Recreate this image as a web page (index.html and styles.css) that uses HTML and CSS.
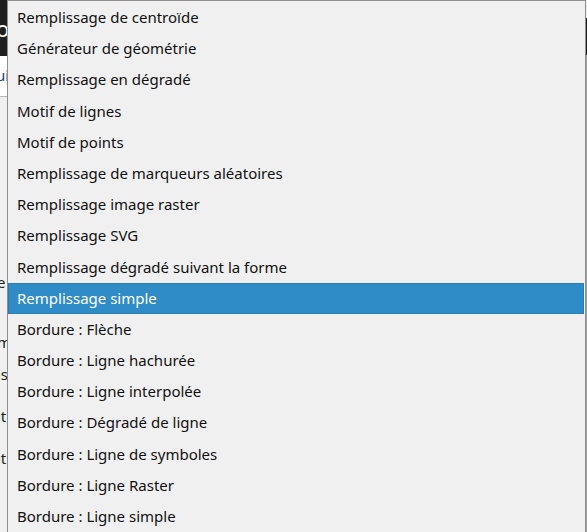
FILE: index.html
```html
<!DOCTYPE html>
<html lang="fr">
<head>
<meta charset="utf-8">
<link rel="stylesheet" href="styles.css">
</head>
<body>
<div class="backdrop">
  <div class="bg-left">
    <div class="bg-dark"><span class="bg-o">o</span></div>
    <div class="bg-field"><span class="bg-ui">ui</span></div>
    <div class="bg-panel">
      <span class="bg-txt t1">e</span>
      <span class="bg-txt t2">m</span>
      <span class="bg-txt t3">is</span>
      <span class="bg-txt t4">it</span>
      <span class="bg-txt t5">it</span>
    </div>
  </div>
  <div class="bg-right">
    <div class="bg-rtop"></div>
    <div class="bg-rdark"></div>
    <div class="bg-rgrey"></div>
  </div>
</div>
<ul class="popup">
  <li class="item">Remplissage de centroïde</li>
  <li class="item">Générateur de géométrie</li>
  <li class="item">Remplissage en dégradé</li>
  <li class="item">Motif de lignes</li>
  <li class="item">Motif de points</li>
  <li class="item">Remplissage de marqueurs aléatoires</li>
  <li class="item">Remplissage image raster</li>
  <li class="item">Remplissage SVG</li>
  <li class="item">Remplissage dégradé suivant la forme</li>
  <li class="item selected">Remplissage simple</li>
  <li class="item">Bordure : Flèche</li>
  <li class="item">Bordure : Ligne hachurée</li>
  <li class="item">Bordure : Ligne interpolée</li>
  <li class="item">Bordure : Dégradé de ligne</li>
  <li class="item">Bordure : Ligne de symboles</li>
  <li class="item">Bordure : Ligne Raster</li>
  <li class="item">Bordure : Ligne simple</li>
</ul>
</body>
</html>
```
FILE: styles.css
```css
html, body {
  margin: 0;
  padding: 0;
  width: 587px;
  height: 532px;
  overflow: hidden;
  font-family: "Noto Sans", "Open Sans", sans-serif;
}
.backdrop {
  display: flex;
  justify-content: space-between;
  height: 532px;
  background: #efefef;
}
.bg-left {
  width: 7px;
  display: flex;
  flex-direction: column;
  overflow: hidden;
}
.bg-dark {
  height: 56px;
  background: #1f1f1f;
  color: #fff;
  font-size: 22px;
  line-height: 56px;
}
.bg-o { margin-left: -4px; }
.bg-field {
  height: 40px;
  background: #fff;
  border-bottom: 1px solid #b8b8b8;
  color: #1c3f7a;
  font-size: 15px;
  line-height: 38px;
}
.bg-ui { margin-left: -4px; }
.bg-panel {
  flex: 1;
  background: #f0f0f0;
  display: flex;
  flex-direction: column;
  font-size: 15px;
  color: #222;
}
.bg-txt { display: block; margin-left: -3px; height: 20px; line-height: 20px; }
.t1 { margin-top: 175px; }
.t2 { margin-top: 40px; }
.t3 { margin-top: 12px; }
.t4 { margin-top: 22px; }
.t5 { margin-top: 22px; }
.bg-right {
  width: 1px;
  display: flex;
  flex-direction: column;
}
.bg-rtop { height: 18px; background: #efefef; }
.bg-rdark { height: 37px; background: #1c1c1c; }
.bg-rgrey { flex: 1; background: #a0a0a0; }

.popup {
  position: absolute;
  left: 7px;
  top: 0;
  width: 577px;
  height: 531px;
  margin: 0;
  padding: 1px 0 0 0;
  list-style: none;
  background: #f0f0f0;
  border: 1px solid #8f8f8f;
  border-bottom: none;
  overflow: hidden;
}
.item {
  height: 31.2px;
  line-height: 31.2px;
  padding-left: 9px;
  font-size: 15px;
  color: #111;
  box-sizing: border-box;
  white-space: nowrap;
}
.selected {
  background: #308cc6;
  color: #fff;
  border: 1px solid #2a7db2;
  padding-left: 8px;
  line-height: 29.2px;
  margin-right: 1px;
}
```
